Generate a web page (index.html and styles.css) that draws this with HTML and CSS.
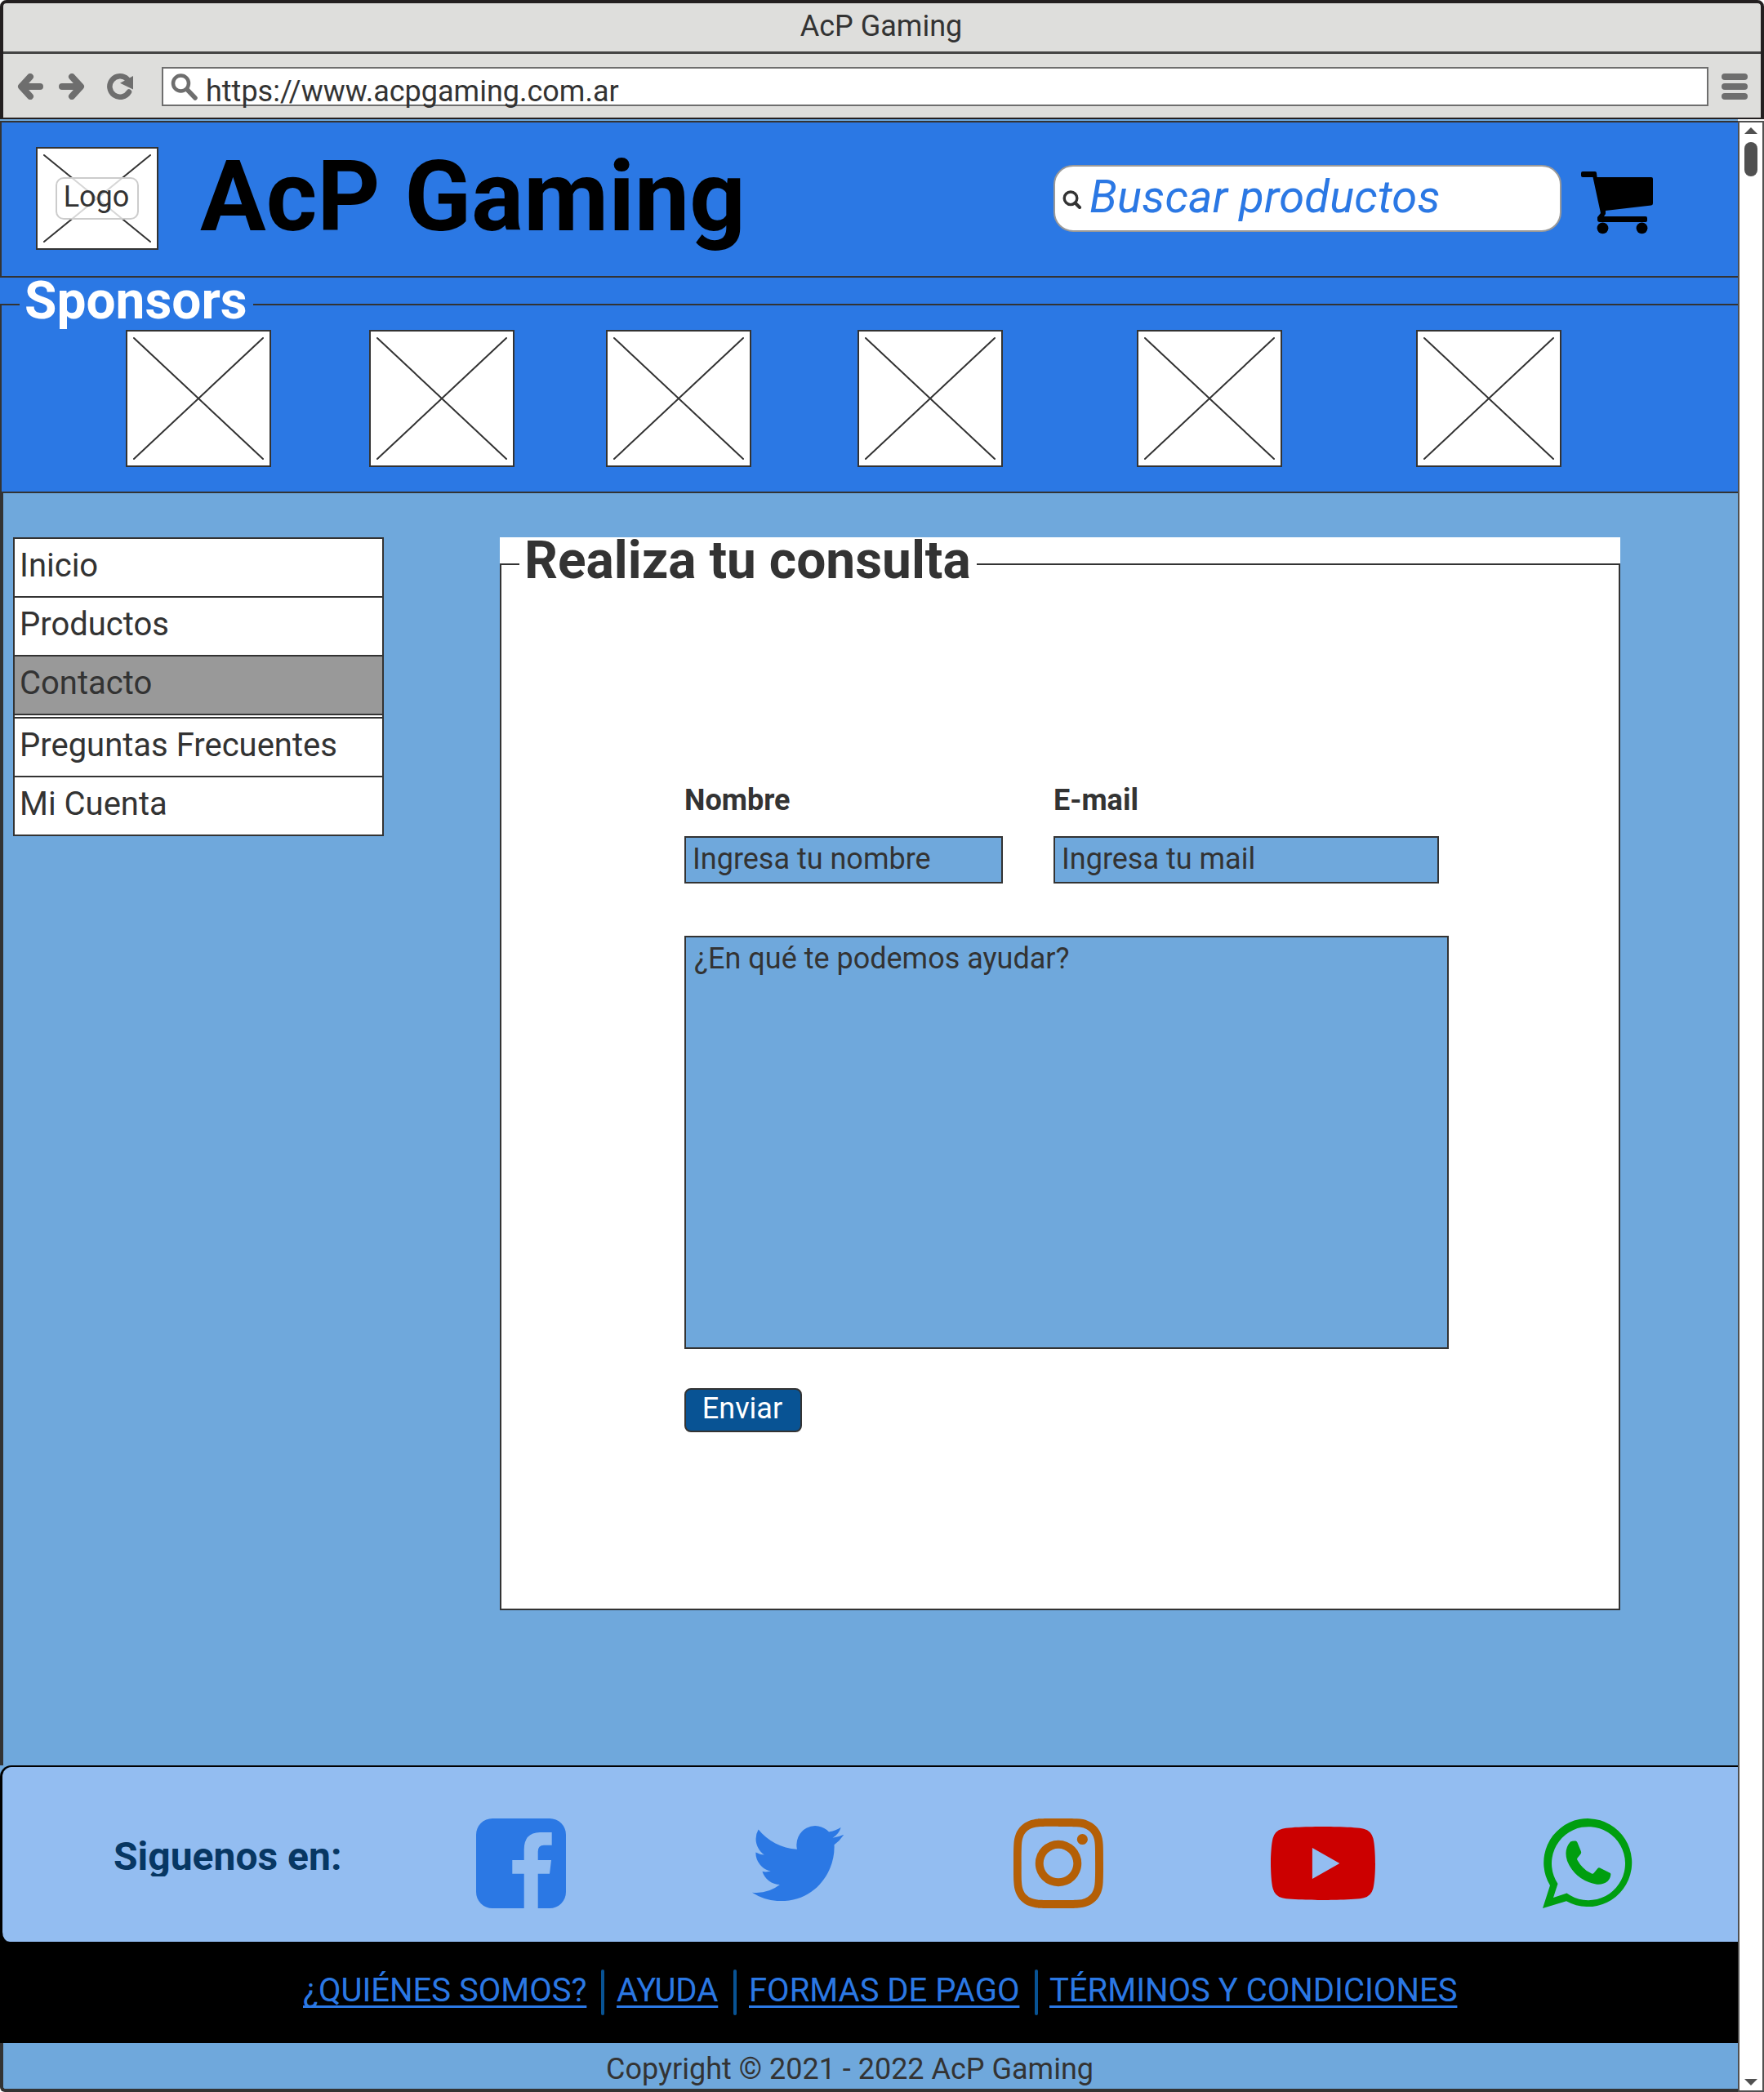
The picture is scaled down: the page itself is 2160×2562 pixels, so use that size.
FILE: index.html
```html
<!DOCTYPE html>
<html lang="es">
<head>
<meta charset="utf-8">
<title>AcP Gaming</title>
<link rel="stylesheet" href="styles.css">
</head>
<body>
<svg class="defs" width="0" height="0" aria-hidden="true">
  <symbol id="placeholder" viewBox="0 0 178 168"><path d="M10 10L168 158M168 10L10 158" fill="none" stroke="#333" stroke-width="2" stroke-linecap="round"/></symbol>
</svg>
<div class="browser">
  <div class="titlebar"><span>AcP Gaming</span></div>
  <div class="toolbar">
    <svg class="back" width="32" height="32" viewBox="0 0 32 32"><path d="M16 4L5 16l11 12M6 16h22" class="nav-stroke"/></svg>
    <svg class="forward" width="32" height="32" viewBox="0 0 32 32"><path d="M16 4l11 12-11 12M26 16H4" class="nav-stroke"/></svg>
    <svg class="reload" width="34" height="32" viewBox="0 0 34 32"><path d="M27 22.500A12.700 12.700 0 1 1 25 7" class="reload-ring"/><path d="M32 3v16.500L16 11.700z" fill="#6e6e6e"/></svg>
    <div class="url">
      <svg width="34" height="34" viewBox="0 0 34 34"><circle cx="12.500" cy="12" r="9.500" fill="none" stroke="#6e6e6e" stroke-width="4.500"/><path d="M20 19.500L30 30" stroke="#6e6e6e" stroke-width="5.500" stroke-linecap="round"/></svg>
      <span>https://www.acpgaming.com.ar</span>
    </div>
    <div class="burger"><i></i><i></i><i></i></div>
  </div>
</div>
<div class="window">
  <div class="page">
    <header class="header">
      <div class="logo">
        <svg width="146" height="122" viewBox="0 0 146 122"><path d="M8 8l130 106M138 8L8 114" fill="none" stroke="#333" stroke-width="2" stroke-linecap="round"/></svg>
        <span>Logo</span>
      </div>
      <h1>AcP Gaming</h1>
      <div class="search">
        <svg width="24" height="24" viewBox="0 0 24 24"><circle cx="10" cy="9.800" r="7.800" fill="none" stroke="#333" stroke-width="3.400"/><path d="M15.500 15.500l5.500 5.500" stroke="#333" stroke-width="4" stroke-linecap="round"/></svg>
        <span>Buscar productos</span>
      </div>
      <svg class="cart" width="90" height="78" viewBox="0 0 90 78"><path d="M3 0h15q2 0 2 2l.6 5H87q2 0 2 2v30q0 2-2 2.500L31 48v4l-2 3h51q2 0 2 2v3q0 2-2 2H24q-3 0-3-3v-3l4-5L15.500 7H3Q1 7 1 5V2Q1 0 3 0z"/><circle cx="27.500" cy="69.300" r="6.900"/><circle cx="75.500" cy="69.300" r="6.900"/></svg>
    </header>
    <section class="group sponsors">
      <div class="legend"><h2>Sponsors</h2></div>
      <div class="group-body">
        <svg class="thumb"><use href="#placeholder"/></svg>
        <svg class="thumb"><use href="#placeholder"/></svg>
        <svg class="thumb"><use href="#placeholder"/></svg>
        <svg class="thumb"><use href="#placeholder"/></svg>
        <svg class="thumb"><use href="#placeholder"/></svg>
        <svg class="thumb"><use href="#placeholder"/></svg>
      </div>
    </section>
    <main class="main">
      <nav class="menu">
        <a>Inicio</a>
        <a>Productos</a>
        <a class="active">Contacto</a>
        <a>Preguntas Frecuentes</a>
        <a>Mi Cuenta</a>
      </nav>
      <section class="group contact">
        <div class="legend"><h2>Realiza tu consulta</h2></div>
        <form class="group-body">
          <div class="fields">
            <label class="name">Nombre<input type="text" placeholder="Ingresa tu nombre"></label>
            <label class="mail">E-mail<input type="text" placeholder="Ingresa tu mail"></label>
          </div>
          <textarea placeholder="¿En qué te podemos ayudar?"></textarea>
          <button type="button">Enviar</button>
        </form>
      </section>
    </main>
    <section class="social-wrap">
      <div class="social">
        <span class="follow">Siguenos en:</span>
        <svg width="110" height="110" viewBox="0 0 110 110"><path fill="#2b78e4" d="M20 0h70a20 20 0 0 1 20 20v70a20 20 0 0 1-20 20H75.700V67.700H90L92 51H75.700V40.500Q75.700 32.700 83 32.700h9.700V17H78Q58.700 17.500 58.700 38v13H44.300v16.700h14.400V110H20A20 20 0 0 1 0 90V20A20 20 0 0 1 20 0z"/></svg>
        <svg width="112" height="92" viewBox="0 2.220 24 19.500" preserveAspectRatio="none"><path fill="#2b78e4" d="M23.953 4.570a10 10 0 0 1-2.825.775 4.958 4.958 0 0 0 2.163-2.723c-.951.555-2.005.959-3.127 1.184a4.920 4.920 0 0 0-8.384 4.482C7.690 8.095 4.067 6.130 1.640 3.162a4.822 4.822 0 0 0-.666 2.475c0 1.710.870 3.213 2.188 4.096a4.904 4.904 0 0 1-2.228-.616v.060a4.923 4.923 0 0 0 3.946 4.827 4.996 4.996 0 0 1-2.212.085 4.936 4.936 0 0 0 4.604 3.417 9.867 9.867 0 0 1-6.102 2.105c-.390 0-.779-.023-1.170-.067a13.995 13.995 0 0 0 7.557 2.209c9.053 0 13.998-7.496 13.998-13.985 0-.210 0-.420-.015-.630A9.935 9.935 0 0 0 24 4.590z"/></svg>
        <svg width="110" height="110" viewBox="0 0 24 24"><path fill="#b45f06" d="M12 0C8.740 0 8.333.015 7.053.072 5.775.132 4.905.333 4.140.630c-.789.306-1.459.717-2.126 1.384S.935 3.350.630 4.140C.333 4.905.131 5.775.072 7.053.012 8.333 0 8.740 0 12s.015 3.667.072 4.947c.060 1.277.261 2.148.558 2.913.306.788.717 1.459 1.384 2.126.667.666 1.336 1.079 2.126 1.384.766.296 1.636.499 2.913.558C8.333 23.988 8.740 24 12 24s3.667-.015 4.947-.072c1.277-.060 2.148-.262 2.913-.558.788-.306 1.459-.718 2.126-1.384.666-.667 1.079-1.335 1.384-2.126.296-.765.499-1.636.558-2.913.060-1.280.072-1.687.072-4.947s-.015-3.667-.072-4.947c-.060-1.277-.262-2.149-.558-2.913-.306-.789-.718-1.459-1.384-2.126C21.319 1.347 20.651.935 19.860.630c-.765-.297-1.636-.499-2.913-.558C15.667.012 15.260 0 12 0zm0 2.160c3.203 0 3.585.016 4.850.071 1.170.055 1.805.249 2.227.415.562.217.960.477 1.382.896.419.420.679.819.896 1.381.164.422.360 1.057.413 2.227.057 1.266.070 1.646.070 4.850s-.015 3.585-.074 4.850c-.061 1.170-.256 1.805-.421 2.227-.224.562-.479.960-.899 1.382-.419.419-.824.679-1.380.896-.420.164-1.065.360-2.235.413-1.274.057-1.649.070-4.859.070-3.211 0-3.586-.015-4.859-.074-1.171-.061-1.816-.256-2.236-.421-.569-.224-.960-.479-1.379-.899-.421-.419-.690-.824-.900-1.380-.165-.420-.359-1.065-.420-2.235-.045-1.260-.061-1.649-.061-4.844 0-3.196.016-3.586.061-4.861.061-1.170.255-1.814.420-2.234.210-.570.479-.960.900-1.381.419-.419.810-.689 1.379-.898.420-.166 1.051-.361 2.221-.421 1.275-.045 1.650-.060 4.859-.060l.045.030zm0 3.678a6.162 6.162 0 1 0 0 12.324 6.162 6.162 0 1 0 0-12.324zM12 16c-2.210 0-4-1.790-4-4s1.790-4 4-4 4 1.790 4 4-1.790 4-4 4zm7.846-10.405a1.441 1.441 0 0 1-2.880 0 1.440 1.440 0 0 1 2.880 0z"/></svg>
        <svg width="128" height="90" viewBox="0 3.545 24 16.910" preserveAspectRatio="none"><path fill="#c00" d="M23.498 6.186a3.016 3.016 0 0 0-2.122-2.136C19.505 3.545 12 3.545 12 3.545s-7.505 0-9.377.505A3.017 3.017 0 0 0 .502 6.186C0 8.070 0 12 0 12s0 3.930.502 5.814a3.016 3.016 0 0 0 2.122 2.136c1.871.505 9.376.505 9.376.505s7.505 0 9.377-.505a3.015 3.015 0 0 0 2.122-2.136C24 15.930 24 12 24 12s0-3.930-.502-5.814zM9.545 15.568V8.432L15.818 12l-6.273 3.568z"/></svg>
        <svg width="110" height="110" viewBox="0 0 110 110"><path fill="#009e0f" fill-rule="evenodd" d="M0 110L9 82A54 54 0 1 1 29 101.300zM18.500 80L13 97l16.500-5.500A45 45 0 1 0 18.500 80z"/><path fill="#009e0f" d="M34 28.500q3-1.500 6.500-1 1.500.5 2 2l4.500 11q.5 1.500-.5 3l-4 5q-.7 1 0 2.500 6 11.500 17.500 16.500 1.500.7 2.500-.5l5-6q1-1 2.500-.4l12 6q1.400.7 1.400 2-.4 5-4 8.500-6 4.500-13 3.600Q40 76 30 52q-4.500-14 4-23.500z"/></svg>
      </div>
    </section>
    <div class="links">
      <a>¿QUIÉNES SOMOS?</a><i></i><a>AYUDA</a><i></i><a>FORMAS DE PAGO</a><i></i><a>TÉRMINOS Y CONDICIONES</a>
    </div>
    <footer class="copyright">Copyright © 2021 - 2022 AcP Gaming</footer>
  </div>
  <aside class="scrollbar">
    <svg width="16" height="8" viewBox="0 0 16 8"><path d="M0 8L8 0l8 8z" fill="#505050"/></svg>
    <div class="knob"></div>
    <svg class="down" width="16" height="8" viewBox="0 0 16 8"><path d="M0 0l8 8 8-8z" fill="#505050"/></svg>
  </aside>
</div>
</body>
</html>
```
FILE: styles.css
```css
* { box-sizing: border-box; }
body {
  margin: 0;
  width: 2160px;
  height: 2562px;
  overflow: hidden;
  background: #fff;
  color: #333;
  font-family: Roboto, "Liberation Sans", sans-serif;
  font-size: 36px;
}
svg { display: block; flex: none; }
h1, h2 { margin: 0; font-weight: 700; white-space: nowrap; }
.defs { position: absolute; }

/* browser chrome */
.browser {
  height: 146px;
  border: 4px solid #231f20;
  border-bottom-width: 2px;
  border-radius: 8px 8px 0 0;
  background: #dededc;
}
.titlebar {
  height: 62px;
  padding-right: 2px;
  border-bottom: 3px solid #444;
  line-height: 56px;
  text-align: center;
}
.toolbar { display: flex; align-items: flex-start; padding: 16px 12px 0 17px; }
.toolbar > svg { margin-top: 8px; }
.back { margin-right: 19px; }
.forward { margin-right: 27px; }
.reload { margin-right: 33px; }
.nav-stroke { fill: none; stroke: #6e6e6e; stroke-width: 8; stroke-linecap: round; stroke-linejoin: round; }
.reload-ring { fill: none; stroke: #6e6e6e; stroke-width: 6.5; stroke-linecap: round; }
.url {
  display: flex;
  width: 1894px;
  height: 48px;
  padding-left: 9px;
  border: 2px solid #6e6e6e;
  background: #fff;
  line-height: 57px;
}
.url svg { margin: 6px 9px 0 0; }
.burger { display: grid; gap: 4px; width: 32px; margin: 8px 0 0 16px; }
.burger i { height: 8px; border-radius: 4px; background: #6e6e6e; }

.window { display: flex; height: 2416px; }
.page { display: flex; flex-direction: column; width: 2128px; border-top: 2px solid #6fa8dc; }

/* scrollbar */
.scrollbar {
  display: flex;
  flex-direction: column;
  align-items: center;
  width: 32px;
  margin-top: 2px;
  padding-top: 6px;
  border: 2px solid #505050;
}
.knob { width: 16px; height: 42px; margin-top: 10px; border-radius: 8px; background: #505050; }
.down { margin: auto 0 6px; }

/* header */
.header {
  display: flex;
  align-items: flex-start;
  height: 192px;
  padding-left: 42px;
  border: solid #333;
  border-width: 2px 0 2px 2px;
  background: #2b78e4;
}
.logo {
  display: grid;
  place-items: center;
  width: 150px;
  height: 126px;
  margin-top: 30px;
  border: 2px solid #333;
  background: #fff;
}
.logo > * { grid-area: 1 / 1; }
.logo span {
  width: 102px;
  height: 52px;
  padding-right: 2px;
  border: 2px solid #ccc;
  border-radius: 10px;
  background: rgba(255, 255, 255, .8);
  line-height: 45px;
  text-align: center;
}
.header h1 { width: 1045px; margin: 21px 0 0 51px; color: #000; font-size: 120px; line-height: 140px; }
.search {
  display: flex;
  width: 622px;
  height: 82px;
  margin-top: 52px;
  padding-left: 9px;
  border: 2px solid #999;
  border-radius: 24px;
  background: #fff;
  color: #2b78e4;
  font-size: 56px;
  font-style: italic;
  line-height: 74px;
  letter-spacing: .2px;
}
.search svg { margin: 29px 9px 0 0; }
.cart { margin: 60px 0 0 23px; }

/* titled groups */
.legend { display: flex; align-items: flex-end; height: 34px; }
.legend::before { content: ""; width: 24px; height: 2px; background: #333; }
.legend::after { content: ""; flex: 1; height: 2px; background: #333; }
.legend h2 { height: 34px; font-size: 64px; line-height: 58px; }
.sponsors { height: 264px; background: #2b78e4; }
.sponsors h2 { width: 286px; padding-left: 6px; color: #fff; }
.sponsors .group-body {
  display: grid;
  grid-template-columns: 298px 290px 308px 342px 342px 178px;
  height: 230px;
  padding: 30px 0 0 152px;
  border: solid #333;
  border-width: 0 0 2px 2px;
}
.thumb { width: 178px; height: 168px; outline: 2px solid #333; outline-offset: -2px; background: #fff; }

/* main area */
.main {
  display: flex;
  align-items: flex-start;
  height: 1558px;
  padding: 54px 0 0 12px;
  border-left: 4px solid #333;
  background: #6fa8dc;
}
.menu { width: 454px; border: 2px solid #333; border-top: 0; background: #fff; font-size: 40px; }
.menu a { display: block; height: 72px; padding-left: 6px; border-top: 2px solid #333; line-height: 65px; }
.menu .active { height: 74px; margin-bottom: 2px; border-bottom: 2px solid #333; background: #999; }
.contact { width: 1372px; height: 1314px; margin-left: 142px; background: #fff; }
.contact h2 { width: 560px; padding-left: 6px; }
.contact .group-body { height: 1280px; padding: 267px 0 0 224px; border: 2px solid #333; border-top: 0; }
.fields { display: flex; gap: 62px; }
.fields label { font-weight: 700; line-height: 42px; }
input, textarea, button { display: block; margin: 0; border: 2px solid #333; border-radius: 0; font: 400 36px Roboto, "Liberation Sans", sans-serif; }
input, textarea { background: #6fa8dc; outline: 0; }
::placeholder { color: #333; opacity: 1; }
input { height: 58px; margin-top: 23px; padding: 0 0 2px 8px; }
.name input { width: 390px; }
.mail input { width: 472px; }
textarea { width: 936px; height: 506px; margin-top: 64px; padding: 1px 10px; line-height: 51px; resize: none; }
button {
  width: 144px;
  height: 54px;
  margin-top: 48px;
  padding: 0 2px 5px 0;
  border-radius: 8px;
  background: #085394;
  color: #fff;
}

/* social strip */
.social-wrap { height: 216px; background: linear-gradient(#6fa8dc 50%, #000 50%); }
.social {
  display: grid;
  grid-template-columns: 444px 338px 320px 315px 333px 110px;
  align-items: center;
  height: 216px;
  padding: 22px 0 0 136px;
  border: solid #000;
  border-width: 2px 0 0 3px;
  border-radius: 14px 0 0 12px;
  background: #93bdf1;
}
.follow {
  height: 52px;
  margin-top: -20px;
  overflow: hidden;
  color: #073763;
  font-size: 48px;
  font-weight: 700;
  line-height: 55px;
}

/* footer */
.links {
  display: grid;
  grid-template-columns: 365px 19px 143px 19px 350px 18px auto;
  align-items: start;
  height: 124px;
  padding: 34px 0 0 371px;
  background: #000;
  color: #2b78e4;
  font-size: 40px;
  line-height: 51px;
}
.links a {
  white-space: nowrap;
  text-decoration: underline;
  text-decoration-thickness: 3px;
  text-underline-offset: 5px;
  text-decoration-skip-ink: none;
}
.links i { width: 4px; height: 56px; border-radius: 2px; background: #085394; }
.copyright {
  height: 60px;
  padding-left: 738px;
  border: solid #333;
  border-width: 0 0 4px 4px;
  border-bottom-left-radius: 6px;
  background: #6fa8dc;
  line-height: 65px;
}
```
